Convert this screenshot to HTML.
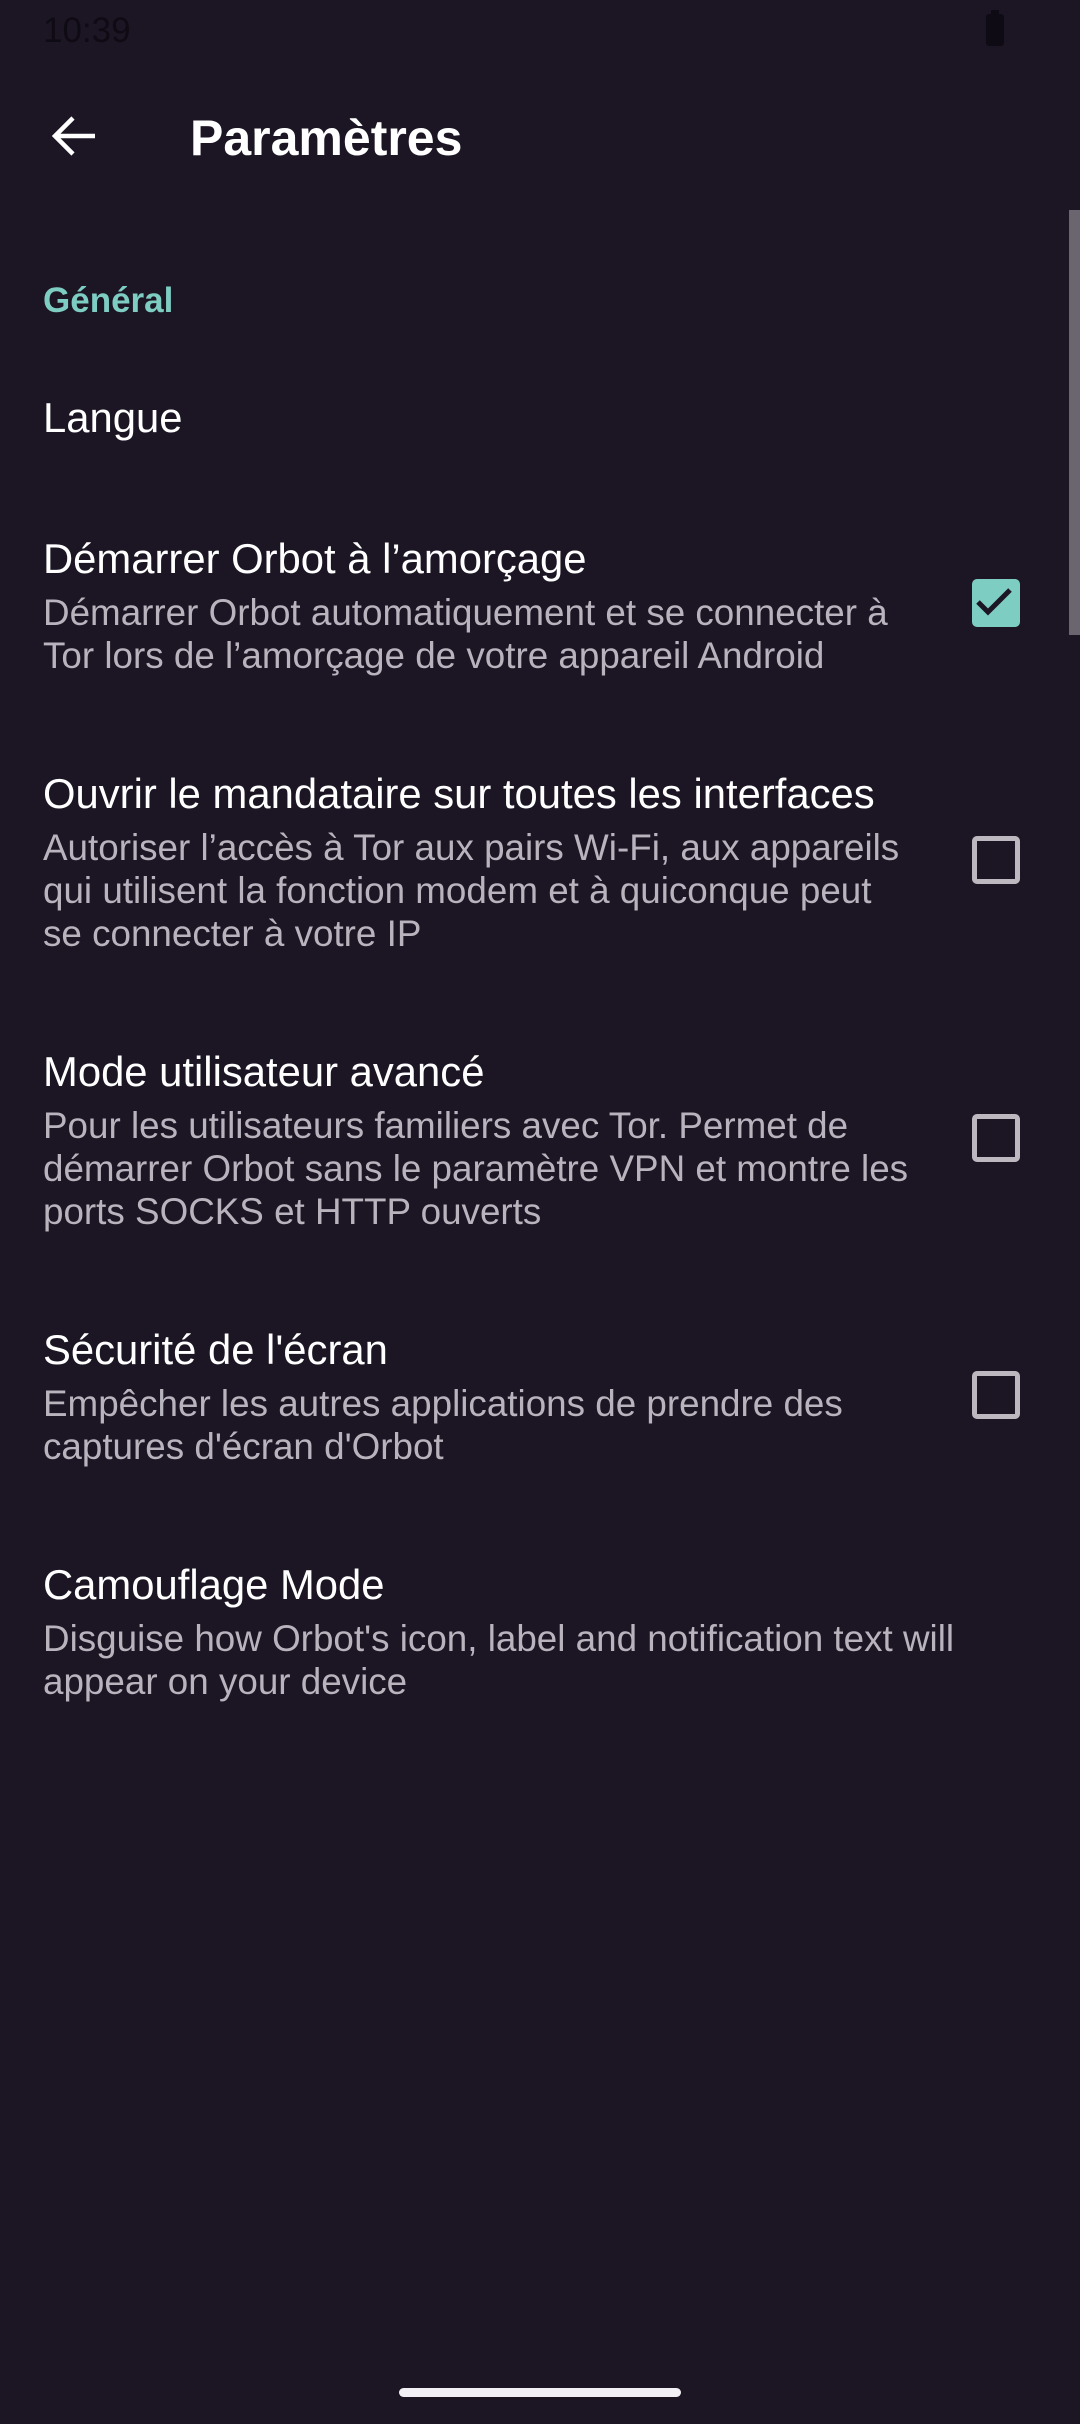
<!DOCTYPE html>
<html><head><meta charset="utf-8"><style>
html,body{margin:0;padding:0}
body{width:1080px;height:2424px;background:#1c1524;position:relative;overflow:hidden;font-family:"Liberation Sans",sans-serif}
.t{position:absolute;left:43px;white-space:nowrap}
.h{color:#fff;font-size:41.8px;line-height:56px}
.s{color:#b8b3bd;font-size:36.8px;line-height:43px}
.cb{position:absolute;left:972px;width:48px;height:48px;box-sizing:border-box;border-radius:5px}
.off{border:5px solid #bdb8c0}
.on{background:#7ecdc3}
</style></head><body>
<div class="t" style="top:10px;font-size:35px;line-height:42px;color:#0f0b14">10:39</div>
<div style="position:absolute;left:986px;top:14px;width:18px;height:32px;background:#0f0b14;border-radius:3px"></div>
<div style="position:absolute;left:991px;top:10px;width:8px;height:5px;background:#0f0b14"></div>
<svg style="position:absolute;left:50px;top:113px" width="48" height="48" viewBox="0 0 48 48"><path d="M45 23H8M23 5L5 23l18 18" fill="none" stroke="#fff" stroke-width="4.5"/></svg>
<div class="t" style="left:190px;top:108px;font-size:50px;line-height:60px;color:#fff;font-weight:bold">Paramètres</div>
<div style="position:absolute;left:1069px;top:210px;width:11px;height:425px;background:#6b6570"></div>
<div class="t" style="top:279px;font-size:35px;line-height:44px;color:#7ecdc3;font-weight:bold">Général</div>
<div class="t h" style="top:390px">Langue</div>
<div class="t h" style="top:531px">Démarrer Orbot à l’amorçage</div>
<div class="t s" style="top:591px">Démarrer Orbot automatiquement et se connecter à<br>Tor lors de l’amorçage de votre appareil Android</div>
<div class="cb on" style="top:579px"><svg width="48" height="48" viewBox="0 0 48 48"><path d="M6 23l10 10L38 11" fill="none" stroke="#1c1524" stroke-width="5"/></svg></div>
<div class="t h" style="top:766px">Ouvrir le mandataire sur toutes les interfaces</div>
<div class="t s" style="top:826px">Autoriser l’accès à Tor aux pairs Wi-Fi, aux appareils<br>qui utilisent la fonction modem et à quiconque peut<br>se connecter à votre IP</div>
<div class="cb off" style="top:836px"></div>
<div class="t h" style="top:1044px">Mode utilisateur avancé</div>
<div class="t s" style="top:1104px">Pour les utilisateurs familiers avec Tor. Permet de<br>démarrer Orbot sans le paramètre VPN et montre les<br>ports SOCKS et HTTP ouverts</div>
<div class="cb off" style="top:1114px"></div>
<div class="t h" style="top:1322px">Sécurité de l'écran</div>
<div class="t s" style="top:1382px">Empêcher les autres applications de prendre des<br>captures d'écran d'Orbot</div>
<div class="cb off" style="top:1371px"></div>
<div class="t h" style="top:1557px">Camouflage Mode</div>
<div class="t s" style="top:1617px">Disguise how Orbot's icon, label and notification text will<br>appear on your device</div>
<div style="position:absolute;left:399px;top:2388px;width:282px;height:9px;border-radius:5px;background:#f2f0f4"></div>
</body></html>
